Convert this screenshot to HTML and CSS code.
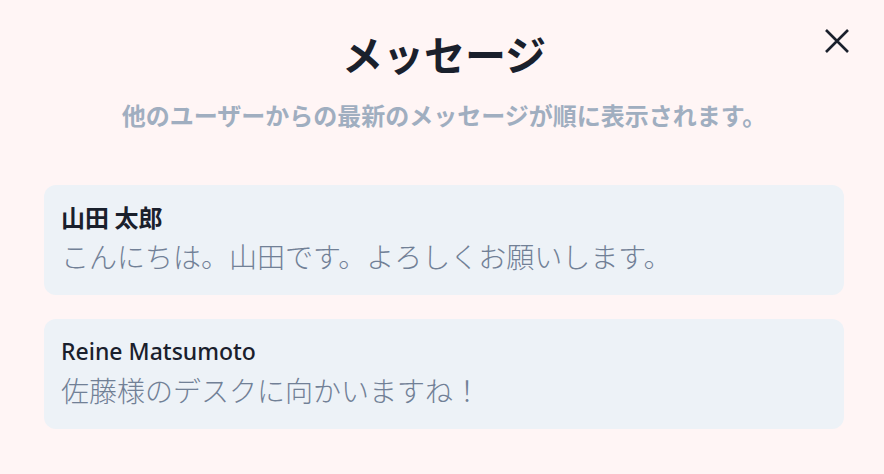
FILE: index.html
```html
<!DOCTYPE html>
<html lang="ja">
<head>
<meta charset="utf-8">
<link rel="stylesheet" href="styles.css">
</head>
<body>
<div class="modal">
  <button class="close" aria-label="閉じる">
    <svg width="26" height="26" viewBox="0 0 26 26"><path d="M2 2L24 24M24 2L2 24" stroke="#1a202c" stroke-width="2.6" stroke-linecap="butt"/></svg>
  </button>
  <h1 class="title">メッセージ</h1>
  <p class="subtitle">他のユーザーからの最新のメッセージが順に表示されます。</p>
  <div class="list">
    <div class="card">
      <div class="name">山田 太郎</div>
      <div class="text">こんにちは。山田です。よろしくお願いします。</div>
    </div>
    <div class="card">
      <div class="name latin">Reine Matsumoto</div>
      <div class="text">佐藤様のデスクに向かいますね！</div>
    </div>
  </div>
</div>
</body>
</html>
```

FILE: styles.css
```css
html, body {
  margin: 0;
  padding: 0;
  background: #fff5f5;
}
body {
  font-family: "Noto Sans CJK JP", "Noto Sans", sans-serif;
  width: 884px;
  height: 474px;
  overflow: hidden;
}
.modal {
  position: relative;
  padding: 26px 40px 0 44px;
  display: flex;
  flex-direction: column;
}
.close {
  position: absolute;
  top: 28px;
  right: 34px;
  border: 0;
  background: transparent;
  padding: 0;
  width: 26px;
  height: 26px;
  cursor: pointer;
}
.close svg { display: block; }
.title {
  margin: 0;
  text-align: center;
  font-size: 41px;
  font-weight: 700;
  line-height: 54px;
  color: #1a202c;
}
.subtitle {
  margin: 18px 0 0;
  text-align: center;
  font-size: 24px;
  font-weight: 700;
  line-height: 34px;
  color: #a0aec0;
}
.list {
  margin-top: 53px;
  display: flex;
  flex-direction: column;
  gap: 24px;
}
.card {
  background: #edf2f7;
  border-radius: 12px;
  padding: 16px 17px 20px;
  height: 110px;
  box-sizing: border-box;
}
.name {
  font-size: 24px;
  font-weight: 700;
  line-height: 32px;
  color: #1a202c;
}
.name.latin {
  font-family: "Noto Sans", sans-serif;
  font-size: 23px;
  font-weight: 500;
}
.text {
  margin-top: 4px;
  font-size: 28px;
  font-weight: 300;
  line-height: 38px;
  color: #718096;
}
```
